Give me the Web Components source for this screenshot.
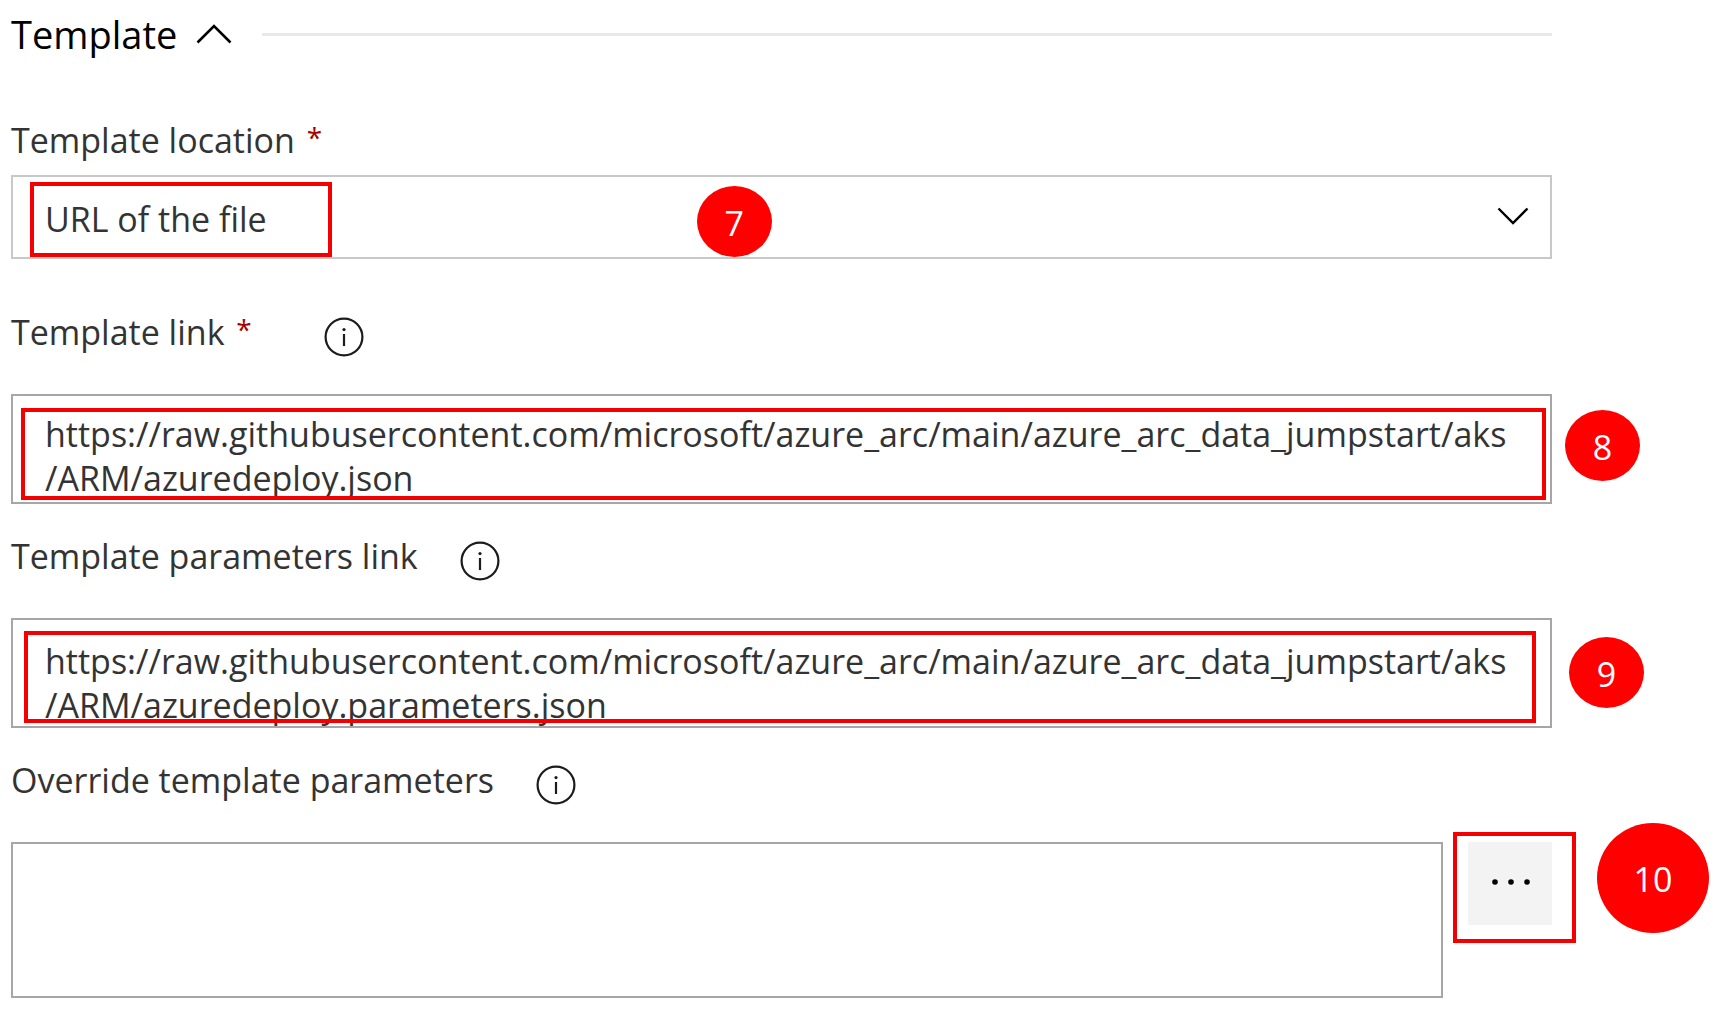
<!DOCTYPE html>
<html lang="en">
<head>
<meta charset="utf-8">
<title>Template</title>
<style>
  body {
    margin: 0;
    background: #fff;
    color: #333;
    font-family: "Open Sans", "Noto Sans", sans-serif;
    font-size: 34px;
    line-height: 44px;
  }
</style>
</head>
<body>
<template-form></template-form>

<script>
const define = (name, html, setup) => {
  const tpl = document.createElement('template');
  tpl.innerHTML = html;
  customElements.define(name, class extends HTMLElement {
    constructor() {
      super();
      this.attachShadow({ mode: 'open' }).append(tpl.content.cloneNode(true));
    }
    connectedCallback() { if (setup) setup(this, this.shadowRoot); }
  });
};

define('mark-box', `
  <style>
    :host { display: block; position: absolute; box-sizing: border-box; border: 4px solid #f40000; pointer-events: none; }
  </style>`);

/* Numbered step badge */
define('step-badge', `
  <style>
    :host { display: flex; position: absolute; align-items: center; justify-content: center; box-sizing: border-box;
      width: 75px; height: 71px; padding-top: 2px; border-radius: 50%; background: #f00; color: #fff; pointer-events: none; }
    :host([large]) { width: 112px; height: 110px; }
  </style>
  <slot></slot>`);

define('info-button', `
  <style>
    :host { display: block; }
    button { display: block; padding: 0; border: 0; background: none; cursor: pointer; }
    svg { display: block; width: 40px; height: 40px; }
  </style>
  <button type="button" aria-label="More information">
    <svg viewBox="0 0 40 40" fill="none" stroke="#1c1c1c">
      <circle cx="20" cy="20" r="18.4" stroke-width="2.2"/>
      <path d="M20 17v12" stroke-width="2.2"/>
      <circle cx="20" cy="12.6" r="1.6" fill="#1c1c1c" stroke="none"/>
    </svg>
  </button>`);

/* Label row: text, required star, information button */
const labelCss = `
  .head { display: flex; align-items: flex-start; gap: 42px; }
  .star { margin-left: 3px; color: #a80000; font-size: 28px; line-height: 28px; vertical-align: 5px; }
  info-button { margin-top: 7px; height: 37px; }
`;

define('section-header', `
  <style>
    :host { display: flex; align-items: center; gap: 30px; color: #000; }
    h2 { margin: 0; font: inherit; }
    button { display: flex; align-items: center; gap: 19px; padding: 0; border: 0; background: none;
      color: inherit; font: inherit; font-size: 38px; line-height: 52px; cursor: pointer; }
    svg { display: block; width: 36px; height: 20px; }
    hr { flex: 1; height: 3px; margin: 0; border: 0; background: #e9e9e9; }
  </style>
  <h2><button type="button" aria-expanded="true"><slot></slot>
    <svg viewBox="0 0 36 20" fill="none" stroke="#000" stroke-width="2.6"><path d="M1.5 18.5 18 2l16.500 16.500"/></svg>
  </button></h2>
  <hr>`);

define('select-field', `
  <style>
    :host { display: block; }
    ${labelCss}
    .control { position: relative; display: grid; align-items: center; margin-top: 13px; }
    select, svg { grid-area: 1 / 1; }
    select { appearance: none; box-sizing: border-box; width: 100%; height: 84px; padding: 4px 80px 0 32px;
      border: 2px solid #c8c8c8; border-radius: 0; background: #fff; color: inherit; font: inherit; }
    svg { justify-self: end; width: 32px; height: 18px; margin: 0 23px 2px 0; pointer-events: none; }
  </style>
  <div class="head"><label for="c"><span class="text"></span> <span class="star">*</span></label></div>
  <div class="control">
    <select id="c" required><option></option></select>
    <svg viewBox="0 0 32 18" fill="none" stroke="#000" stroke-width="2.4"><path d="M1.500 1.500 16 16 30.500 1.500"/></svg>
    <slot></slot>
  </div>`, (el, root) => {
    root.querySelector('.text').textContent = el.getAttribute('label');
    root.querySelector('option').textContent = el.getAttribute('value');
  });

define('text-field', `
  <style>
    :host { display: block; }
    ${labelCss}
    .star { margin-right: 30px; }
    :host(:not([required])) .star { display: none; }
    .control { position: relative; display: flex; gap: 25px; margin-top: 40px; }
    textarea { flex: 1; min-width: 0; box-sizing: border-box; height: 110px; padding: 16px 32px 0;
      border: 2px solid #a6a6a6; border-radius: 0; background: #fff; color: inherit; font: inherit;
      resize: none; overflow: hidden; }
    :host([low]) textarea { padding-top: 19px; }
    :host([tall]) textarea { height: 156px; }
  </style>
  <div class="head">
    <label for="c"><span class="text"></span> <span class="star">*</span></label>
    <info-button></info-button>
  </div>
  <div class="control">
    <textarea id="c" spellcheck="false"></textarea>
    <slot></slot>
  </div>`, (el, root) => {
    root.querySelector('.text').textContent = el.getAttribute('label');
    root.querySelector('textarea').value = el.getAttribute('value') || '';
  });

define('more-button', `
  <style>
    :host { display: block; }
    button { display: grid; place-items: center; width: 84px; height: 83px; padding: 0 0 4px; border: 0;
      background: #f3f3f3; cursor: pointer; }
    svg { display: block; width: 40px; height: 8px; }
  </style>
  <button type="button" aria-label="Edit parameters">
    <svg viewBox="0 0 40 8"><circle cx="5" cy="4" r="2.800"/><circle cx="21" cy="4" r="2.800"/><circle cx="37" cy="4" r="2.800"/></svg>
  </button>`);

define('template-form', `
  <style>
    :host { display: block; padding: 8px 164px 24px 11px; }
    select-field { margin: 58px 0 51px; }
    text-field + text-field { margin-top: 30px; }
    .m7 { inset: 7px auto 2px 19px; width: 302px; }
    .m8 { inset: 14px 6px 4px 10px; }
    .m9 { inset: 13px 16px 5px 13px; }
    .m10 { top: -10px; right: -24px; width: 123px; height: 111px; }
    .b7 { left: 44.500%; top: 11px; }
    .b8 { left: calc(100% + 13px); top: 16px; }
    .b9 { left: calc(100% + 17px); top: 19px; }
    .b10 { left: calc(100% + 45px); top: -19px; }
  </style>
  <section-header>Template</section-header>
  <select-field label="Template location" value="URL of the file">
    <mark-box class="m7"></mark-box>
    <step-badge class="b7">7</step-badge>
  </select-field>
  <text-field required label="Template link"
    value="https://raw.githubusercontent.com/microsoft/azure_arc/main/azure_arc_data_jumpstart/aks&#10;/ARM/azuredeploy.json">
    <mark-box class="m8"></mark-box>
    <step-badge class="b8">8</step-badge>
  </text-field>
  <text-field low label="Template parameters link"
    value="https://raw.githubusercontent.com/microsoft/azure_arc/main/azure_arc_data_jumpstart/aks&#10;/ARM/azuredeploy.parameters.json">
    <mark-box class="m9"></mark-box>
    <step-badge class="b9">9</step-badge>
  </text-field>
  <text-field tall label="Override template parameters">
    <more-button></more-button>
    <mark-box class="m10"></mark-box>
    <step-badge large class="b10">10</step-badge>
  </text-field>`);
</script>
</body>
</html>
